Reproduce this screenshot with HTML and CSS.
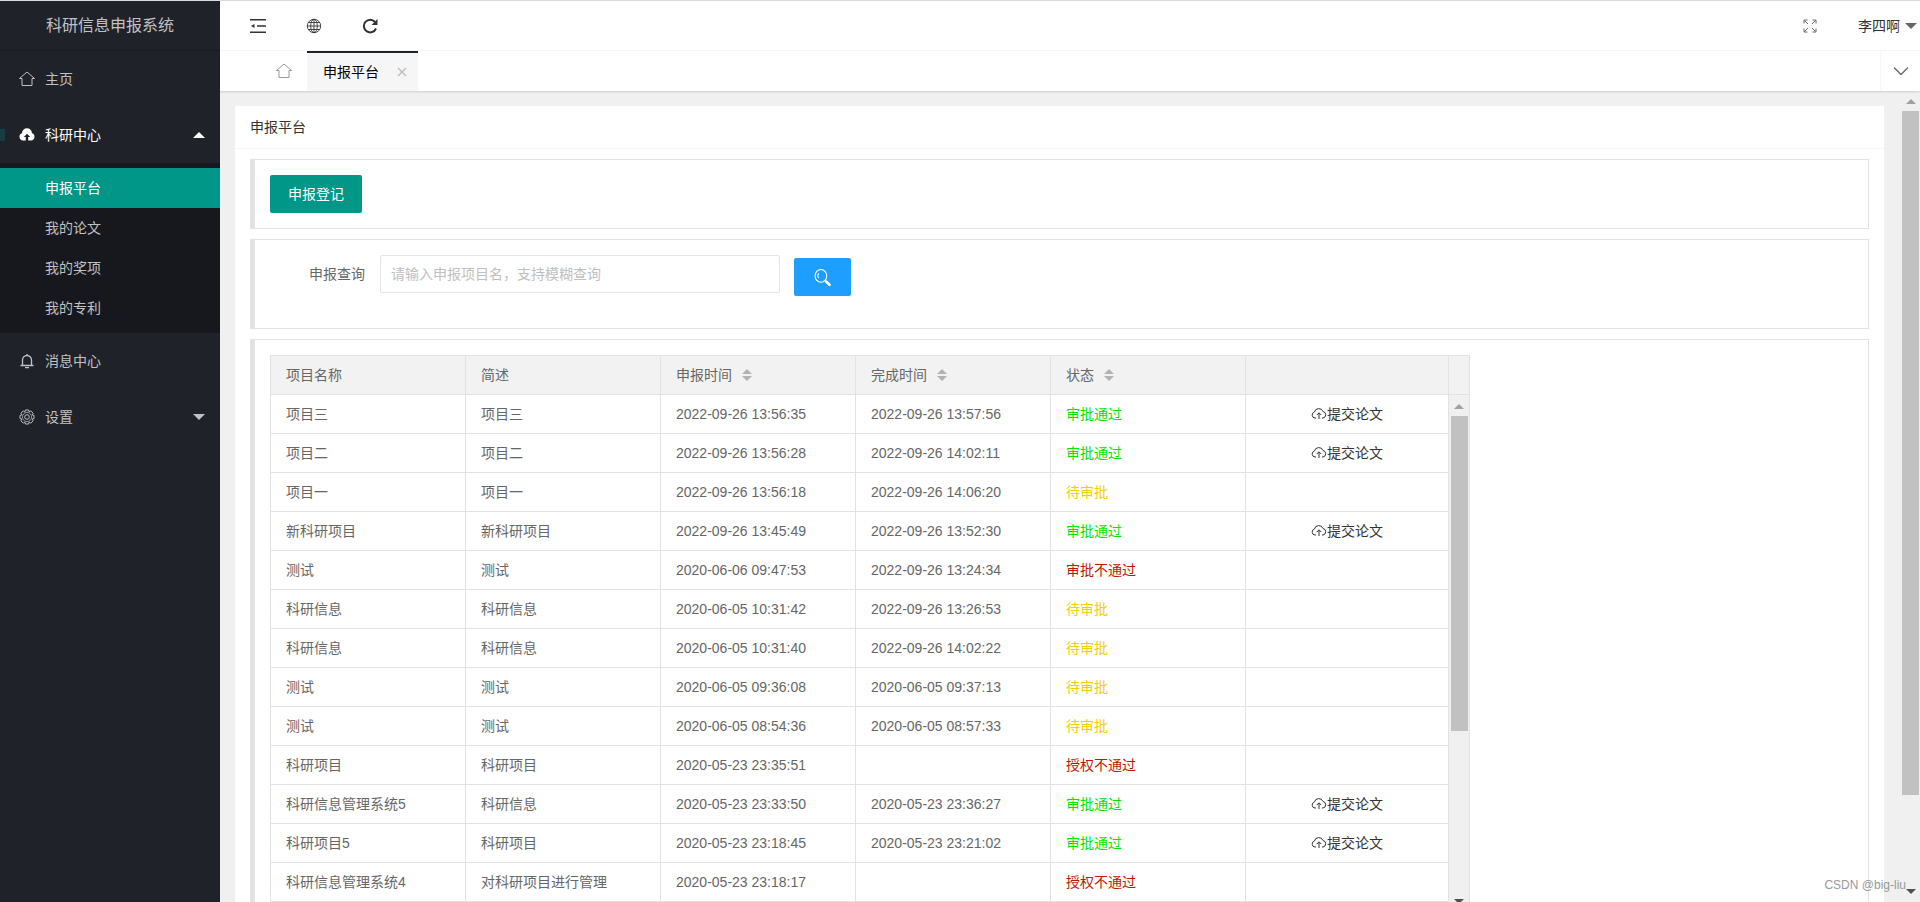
FILE: index.html
```html
<!DOCTYPE html>
<html lang="zh-CN">
<head>
  <meta charset="UTF-8">
  <meta name="viewport" content="width=device-width, initial-scale=1.0">
  <title>科研信息申报系统</title>
  <link rel="stylesheet" href="styles.css">
</head>
<body>

  <!-- icons -->
  <svg class="sprite" aria-hidden="true">
    <symbol id="i-home" viewBox="0 0 16 16"><path d="M.5 7.500 8 1l7.500 6.500H13v7H3v-7z" /></symbol>
    <symbol id="i-cloud" viewBox="0 0 16 16"><path d="M5 12H4a3 3 0 0 1-.6-5.900A4.500 4.500 0 0 1 12 5.500 3.300 3.300 0 0 1 12 12h-1M8 13V7M5.800 9 8 6.800 10.200 9" /></symbol>
    <symbol id="i-cloud-fill" viewBox="0 0 16 16"><path fill="currentColor" stroke="none" d="M4 13.500a3.700 3.700 0 0 1-1-7.200 5 5 0 0 1 10 0 3.700 3.700 0 0 1-1 7.200H9.200V10h2L8 6.700 4.800 10h2v3.500z" /></symbol>
    <symbol id="i-bell" viewBox="0 0 16 16"><path stroke-width="1.300" d="M1.500 12.500h13M3.500 12.500V7a4.500 4.500 0 0 1 9 0v5.500M6 14.700h4M8 1v1.500" /></symbol>
    <symbol id="i-gear" viewBox="0 0 16 16"><circle cx="8" cy="8" r="2.300" /><path stroke-linejoin="round" d="M6.400 1h3.200l.5 1.900 1.700-1 2.300 2.300-1 1.700 1.900.5v3.200l-1.900.5 1 1.700-2.300 2.300-1.700-1-.5 1.900H6.400l-.5-1.900-1.700 1-2.300-2.300 1-1.700L1 9.600V6.400l1.900-.5-1-1.700 2.300-2.300 1.700 1z" /><circle cx="8" cy="8" r="4.600" stroke-width=".7" /></symbol>
    <symbol id="i-shrink" viewBox="0 0 16 16"><path stroke-width="1.500" d="M0 1.700h16M7 8h9M0 14.300h16" /><path fill="currentColor" stroke="none" d="M1 8l3.500-2v4z" /></symbol>
    <symbol id="i-globe" viewBox="0 0 16 16"><g stroke-width=".9"><circle cx="8" cy="8" r="6.700" /><ellipse cx="8" cy="8" rx="3.300" ry="6.700" /><path d="M1.300 8h13.400M8 1.300v13.400M2.500 4.500h11M2.500 11.500h11" /></g></symbol>
    <symbol id="i-refresh" viewBox="0 0 16 16"><path stroke-width="2" d="M14 10.500A6.300 6.300 0 1 1 13 4" /><path fill="currentColor" stroke="none" d="M15.500 1v6h-6z" /></symbol>
    <symbol id="i-full" viewBox="0 0 16 16"><path d="M6 6 2.500 2.500M2 5.500V2h3.500M10 6l3.500-3.500M10.500 2H14v3.500M6 10l-3.500 3.500M2 10.500V14h3.500M10 10l3.500 3.500M14 10.500V14h-3.500" /></symbol>
    <symbol id="i-close" viewBox="0 0 16 16"><path stroke-width="1.300" d="M4 4l8 8M12 4l-8 8" /></symbol>
    <symbol id="i-down" viewBox="0 0 16 16"><path stroke-width="1.300" d="M1 4.500l7 7 7-7" /></symbol>
    <symbol id="i-search" viewBox="0 0 16 16"><ellipse cx="6.500" cy="6.500" rx="5.500" ry="6" /><path d="M4.500 4a3.500 3.500 0 0 0 0 4.500" /><path stroke-width="2.500" stroke-linecap="round" d="M11.500 11.800l3 3" /></symbol>
  </svg>

  <aside class="side">
    <h1 class="logo">科研信息申报系统</h1>
    <nav class="menu">
      <a href="#" class="menu-item"><svg><use href="#i-home" /></svg>主页</a>
      <a href="#" class="menu-item open"><svg><use href="#i-cloud-fill" /></svg>科研中心<i class="caret up"></i></a>
      <div class="submenu">
        <a href="#" class="active">申报平台</a>
        <a href="#">我的论文</a>
        <a href="#">我的奖项</a>
        <a href="#">我的专利</a>
      </div>
      <a href="#" class="menu-item"><svg><use href="#i-bell" /></svg>消息中心</a>
      <a href="#" class="menu-item"><svg><use href="#i-gear" /></svg>设置<i class="caret"></i></a>
    </nav>
  </aside>

  <div class="main">
    <header class="topbar">
      <button class="icon-btn" aria-label="收起菜单"><svg><use href="#i-shrink" /></svg></button>
      <button class="icon-btn" aria-label="前台"><svg><use href="#i-globe" /></svg></button>
      <button class="icon-btn" aria-label="刷新"><svg><use href="#i-refresh" /></svg></button>
      <button class="icon-btn full" aria-label="全屏"><svg><use href="#i-full" /></svg></button>
      <a href="#" class="user">李四啊<i class="caret"></i></a>
    </header>

    <div class="tabs">
      <a href="#" class="tab-home" aria-label="主页"><svg><use href="#i-home" /></svg></a>
      <div class="tab">
        <a href="#">申报平台</a>
        <button aria-label="关闭"><svg><use href="#i-close" /></svg></button>
      </div>
      <button class="tab-more" aria-label="更多"><svg><use href="#i-down" /></svg></button>
    </div>

    <div class="pane">
      <div class="card">
        <h2>申报平台</h2>
        <div class="card-body">
          <div class="quote">
            <button class="btn">申报登记</button>
          </div>
          <form class="quote search">
            <label for="key">申报查询</label>
            <input type="text" id="key" placeholder="请输入申报项目名，支持模糊查询">
            <button type="button" class="btn blue" aria-label="查询"><svg><use href="#i-search" /></svg></button>
          </form>
          <div class="quote">
            <div class="table-view">
              <table>
                <colgroup>
                  <col><col><col><col><col><col class="col-tool">
                </colgroup>
                <thead>
                  <tr>
                    <th>项目名称</th>
                    <th>简述</th>
                    <th>申报时间<i class="sort"></i></th>
                    <th>完成时间<i class="sort"></i></th>
                    <th>状态<i class="sort"></i></th>
                    <th></th>
                  </tr>
                </thead>
                <tbody id="rows"></tbody>
              </table>
              <div class="gutter">
                <div class="gutter-head"></div>
                <div class="scroll inner"><i class="arrow up"></i><div class="thumb"></div><i class="arrow"></i></div>
              </div>
            </div>
          </div>
        </div>
      </div>
      <div class="scroll"><i class="arrow up"></i><div class="thumb"></div><i class="arrow"></i></div>
    </div>
  </div>

  <div class="mark">CSDN @big-liu</div>

  <script>
  var pass = '审批通过', wait = '待审批', fail = '审批不通过', deny = '授权不通过';
  var colors = {};
  colors[pass] = 'green';
  colors[wait] = 'yellow';
  colors[fail] = 'red';
  colors[deny] = 'red';

  var data = [
    ['项目三', '项目三', '2022-09-26 13:56:35', '2022-09-26 13:57:56', pass],
    ['项目二', '项目二', '2022-09-26 13:56:28', '2022-09-26 14:02:11', pass],
    ['项目一', '项目一', '2022-09-26 13:56:18', '2022-09-26 14:06:20', wait],
    ['新科研项目', '新科研项目', '2022-09-26 13:45:49', '2022-09-26 13:52:30', pass],
    ['测试', '测试', '2020-06-06 09:47:53', '2022-09-26 13:24:34', fail],
    ['科研信息', '科研信息', '2020-06-05 10:31:42', '2022-09-26 13:26:53', wait],
    ['科研信息', '科研信息', '2020-06-05 10:31:40', '2022-09-26 14:02:22', wait],
    ['测试', '测试', '2020-06-05 09:36:08', '2020-06-05 09:37:13', wait],
    ['测试', '测试', '2020-06-05 08:54:36', '2020-06-05 08:57:33', wait],
    ['科研项目', '科研项目', '2020-05-23 23:35:51', '', deny],
    ['科研信息管理系统5', '科研信息', '2020-05-23 23:33:50', '2020-05-23 23:36:27', pass],
    ['科研项目5', '科研项目', '2020-05-23 23:18:45', '2020-05-23 23:21:02', pass],
    ['科研信息管理系统4', '对科研项目进行管理', '2020-05-23 23:18:17', '', deny]
  ];

  // only approved projects can upload a paper
  var upload = '<a href="#" class="upload"><svg><use href="#i-cloud" /></svg>提交论文</a>';

  document.querySelector('#rows').innerHTML = data.map(function(r){
    return `<tr>
      <td>${r[0]}</td>
      <td>${r[1]}</td>
      <td>${r[2]}</td>
      <td>${r[3]}</td>
      <td class="${colors[r[4]]}">${r[4]}</td>
      <td>${r[4] == pass ? upload : ''}</td>
    </tr>`;
  }).join('');
  </script>
</body>
</html>
```

FILE: styles.css
```css
* {
  box-sizing: border-box;
}

body {
  margin: 0;
  height: 100vh;
  display: flex;
  overflow: hidden;
  border-top: 1px solid #d9dadb;
  font: 14px/24px "Liberation Sans", "Noto Sans CJK SC", sans-serif;
  color: #666;
  background-color: #f0f0f0;
}

a {
  color: inherit;
  text-decoration: none;
}

button {
  padding: 0;
  border: none;
  background: none;
  font: inherit;
  color: inherit;
  cursor: pointer;
}

h1, h2 {
  margin: 0;
  font-weight: normal;
}

svg {
  width: 16px;
  height: 16px;
  flex-shrink: 0;
  fill: none;
  stroke: currentColor;
}

.sprite {
  position: absolute;
  width: 0;
  height: 0;
}

.caret {
  border: 6px solid transparent;
  border-top-color: currentColor;
  border-bottom-width: 0;
}

.caret.up {
  border-top-width: 0;
  border-bottom: 6px solid #fff;
}

/* side menu */
.side {
  width: 220px;
  flex-shrink: 0;
  background-color: #20222a;
  color: #c0c1c3;
}

.logo {
  height: 50px;
  line-height: 50px;
  font-size: 16px;
  text-align: center;
  border-bottom: 1px solid #1b1d24;
}

.menu-item {
  position: relative;
  display: flex;
  align-items: center;
  gap: 10px;
  height: 56px;
  padding: 0 15px 0 19px;
}

.menu-item .caret {
  margin-left: auto;
}

.menu-item.open {
  color: #fff;
}

.menu-item.open::before {
  content: "";
  position: absolute;
  left: 0;
  width: 5px;
  height: 12px;
  background-color: #173c41;
}

.submenu {
  padding: 5px 0;
  background-color: #16181d;
}

.submenu a {
  display: block;
  padding-left: 45px;
  line-height: 40px;
}

.submenu .active {
  background-color: #009688;
  color: #fff;
}

/* top */
.main {
  flex: 1;
  min-width: 0;
  display: flex;
  flex-direction: column;
}

.topbar {
  display: flex;
  align-items: center;
  height: 50px;
  padding: 0 3px 0 10px;
  background-color: #fff;
  border-bottom: 1px solid #f6f6f6;
  color: #333;
}

.icon-btn {
  display: flex;
  align-items: center;
  justify-content: center;
  width: 56px;
  height: 40px;
}

.full {
  margin-left: auto;
  margin-right: 20px;
  color: #666;
}

.user {
  display: flex;
  align-items: center;
  gap: 5px;
}

.user .caret {
  color: #666;
}

.tabs {
  display: flex;
  position: relative;
  height: 40px;
  padding-left: 40px;
  background-color: #fff;
  box-shadow: 0 1px 2px rgba(0, 0, 0, .15);
}

.tab-home {
  display: flex;
  align-items: center;
  justify-content: center;
  width: 47px;
  color: #999;
}

.tab {
  display: flex;
  align-items: center;
  gap: 15px;
  padding: 0 8px 0 16px;
  border-top: 2px solid #20222a;
  background-color: #f6f6f6;
  color: #000;
}

.tab button {
  display: flex;
  color: #bbb;
}

.tab-more {
  display: flex;
  align-items: center;
  justify-content: center;
  width: 40px;
  margin-left: auto;
  border-left: 1px solid #f6f6f6;
}

/* content */
.pane {
  flex: 1;
  min-height: 0;
  display: flex;
  align-items: flex-start;
  gap: 17px;
  padding-left: 15px;
}

.card {
  flex: 1;
  margin-top: 15px;
  background-color: #fff;
}

.card h2 {
  padding: 0 15px;
  font-size: 14px;
  line-height: 42px;
  color: #333;
  border-bottom: 1px solid #f6f6f6;
}

.card-body {
  padding: 10px 15px;
}

.quote {
  padding: 15px;
  margin-bottom: 10px;
  border: 1px solid #e2e2e2;
  border-left-width: 5px;
}

.btn {
  display: block;
  height: 38px;
  padding: 0 18px;
  border-radius: 2px;
  background-color: #009688;
  color: #fff;
}

.blue {
  margin-top: 3px;
  padding: 0 20px;
  background-color: #1e9fff;
}

.blue svg {
  display: block;
  width: 17px;
  height: 17px;
}

.search {
  display: flex;
  align-items: flex-start;
  height: 90px;
}

.search label {
  width: 110px;
  padding: 7px 15px;
  text-align: right;
}

.search input {
  width: 400px;
  height: 38px;
  margin-right: 14px;
  padding: 0 10px;
  border: 1px solid #e6e6e6;
  border-radius: 2px;
  font: inherit;
}

.search input::placeholder {
  color: #c0c0c0;
}

/* table */
.table-view {
  display: flex;
  align-items: flex-start;
  max-width: 1200px;
  border: 1px solid #e2e2e2;
}

table {
  flex: 1;
  table-layout: fixed;
  border-collapse: separate;
  border-spacing: 0;
}

col {
  width: 195px;
}

.col-tool {
  width: auto;
}

th, td {
  height: 39px;
  padding: 0 15px;
  border-right: 1px solid #e2e2e2;
  border-bottom: 1px solid #e2e2e2;
  font-weight: normal;
  text-align: left;
  white-space: nowrap;
}

th {
  background-color: #f2f2f2;
}

.sort {
  display: inline-block;
  width: 10px;
  height: 12px;
  margin-left: 10px;
  vertical-align: -1px;
  background-color: #b2b2b2;
  clip-path: polygon(50% 0, 100% 42%, 0 42%, 0 58%, 100% 58%, 50% 100%, 0 58%, 0 42%);
}

.green {
  color: #00e600;
}

.yellow {
  color: #f0d000;
}

.red {
  color: #c01800;
}

.upload {
  display: flex;
  align-items: center;
  justify-content: center;
  color: #333;
}

.gutter {
  display: flex;
  flex-direction: column;
  width: 20px;
  height: 556px;
}

.gutter-head {
  height: 39px;
  background-color: #f2f2f2;
  border-bottom: 1px solid #e2e2e2;
}

/* scroll bars */
.scroll {
  align-self: stretch;
  display: flex;
  flex-direction: column;
  align-items: center;
  width: 19px;
  padding: 8px 0;
  background-color: #f0f0f0;
}

.scroll.inner {
  flex: 1;
  width: auto;
  padding-top: 9px;
}

.arrow {
  margin-top: auto;
  border: 5px solid transparent;
  border-top-color: #505050;
  border-bottom-width: 0;
}

.arrow.up {
  margin: 0 0 7px;
  border-top-width: 0;
  border-bottom: 5px solid #a0a0a0;
}

.thumb {
  width: 17px;
  height: 86%;
  background-color: #c1c1c1;
}

.inner .thumb {
  height: 63%;
}

.mark {
  position: absolute;
  right: 14px;
  bottom: 5px;
  font-size: 12px;
  color: #999;
}
```
